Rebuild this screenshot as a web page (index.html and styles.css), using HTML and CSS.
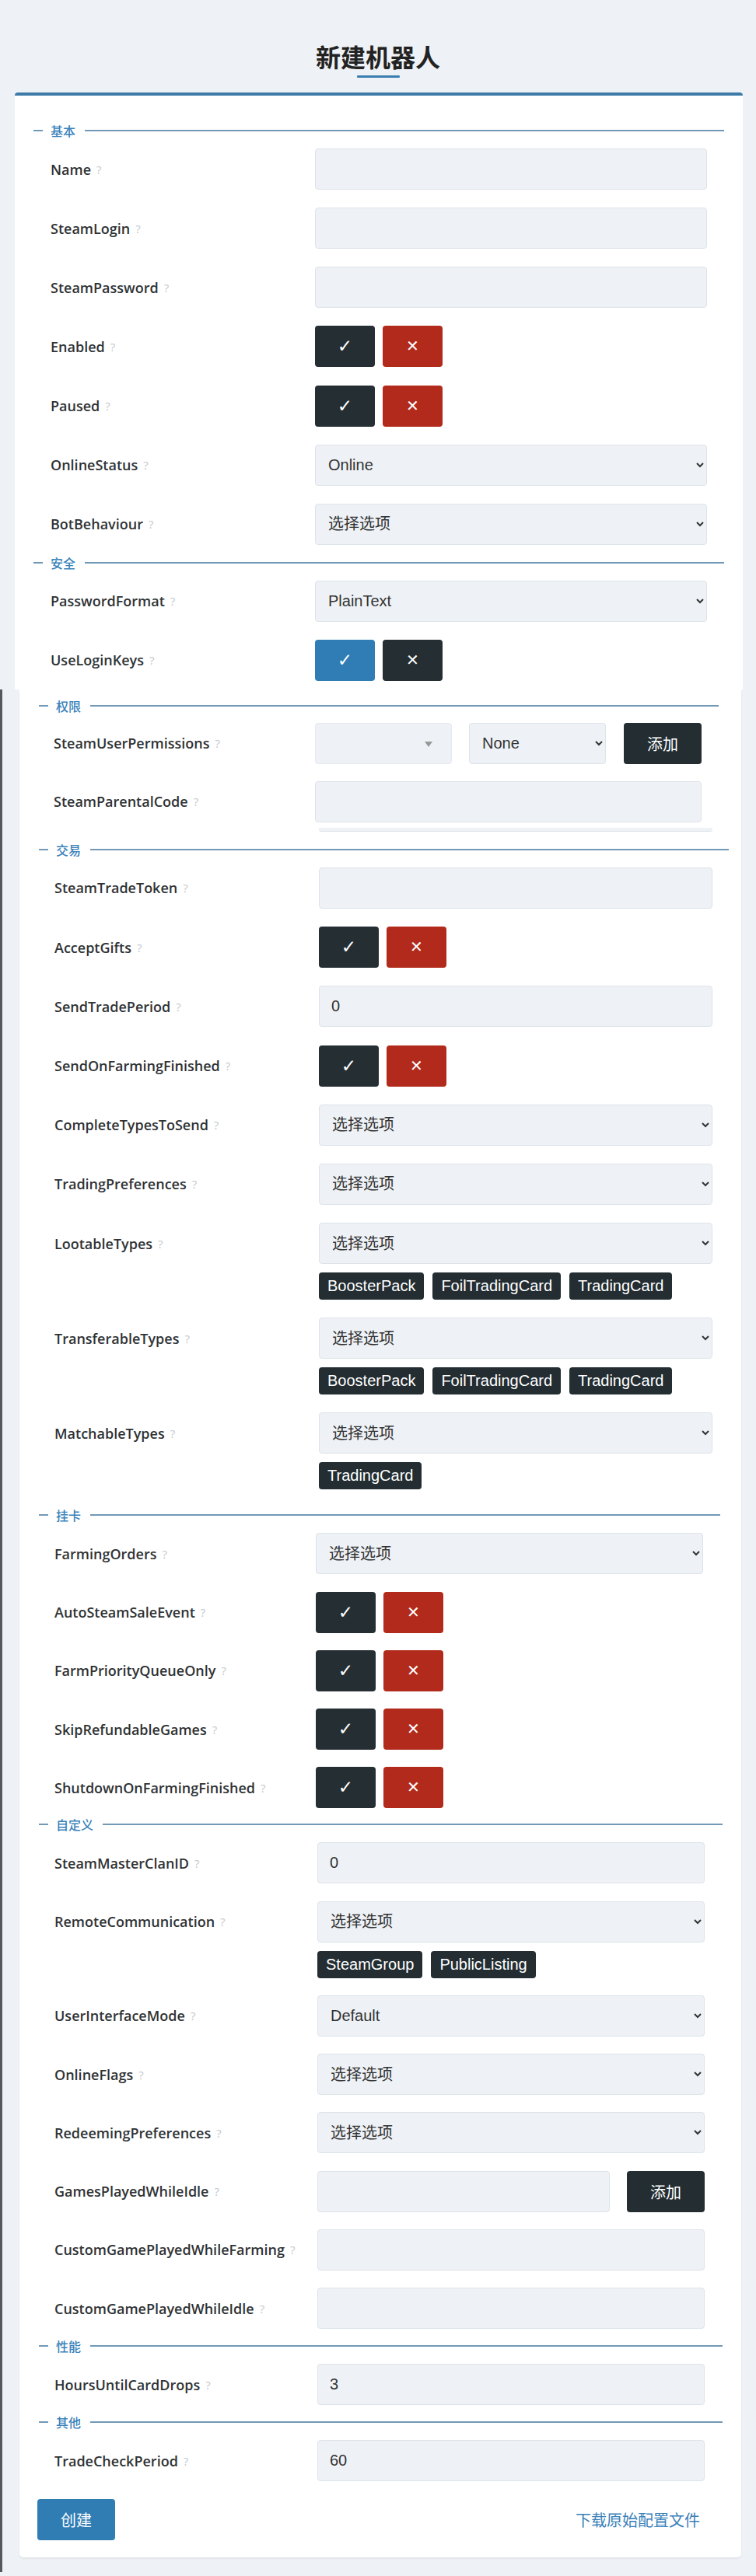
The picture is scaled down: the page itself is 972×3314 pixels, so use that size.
FILE: index.html
```html
<!DOCTYPE html>
<html lang="zh-CN">
<head>
<meta charset="utf-8">
<title>新建机器人</title>
<link rel="stylesheet" href="styles.css">
</head>
<body>
<header class="page-head">
  <h1 class="page-title">新建机器人</h1>
  <div class="title-bar"></div>
</header>

<div class="card card--top">
  <section class="group g-basic">
    <div class="legend"><span>基本</span></div>
    <div class="row"><label class="lbl">Name<span class="help">?</span></label><div class="ctl"><input class="field" type="text"></div></div>
    <div class="row"><label class="lbl">SteamLogin<span class="help">?</span></label><div class="ctl"><input class="field" type="text"></div></div>
    <div class="row"><label class="lbl">SteamPassword<span class="help">?</span></label><div class="ctl"><input class="field" type="password"></div></div>
    <div class="row"><label class="lbl">Enabled<span class="help">?</span></label><div class="ctl toggles"><button class="tg tg--dark">✓</button><button class="tg tg--red tg--x">✕</button></div></div>
    <div class="row"><label class="lbl">Paused<span class="help">?</span></label><div class="ctl toggles"><button class="tg tg--dark">✓</button><button class="tg tg--red tg--x">✕</button></div></div>
    <div class="row"><label class="lbl">OnlineStatus<span class="help">?</span></label><div class="ctl"><select class="field"><option>Online</option></select></div></div>
    <div class="row"><label class="lbl">BotBehaviour<span class="help">?</span></label><div class="ctl"><select class="field"><option>选择选项</option></select></div></div>
  </section>
  <section class="group g-security">
    <div class="legend"><span>安全</span></div>
    <div class="row"><label class="lbl">PasswordFormat<span class="help">?</span></label><div class="ctl"><select class="field"><option>PlainText</option></select></div></div>
    <div class="row"><label class="lbl">UseLoginKeys<span class="help">?</span></label><div class="ctl toggles"><button class="tg tg--blue">✓</button><button class="tg tg--dark tg--x">✕</button></div></div>
  </section>
</div>

<div class="lower">
  <div class="card card--bottom">
    <section class="group g-perm">
      <div class="legend"><span>权限</span></div>
      <div class="row"><label class="lbl">SteamUserPermissions<span class="help">?</span></label>
        <div class="ctl combo">
          <div class="fake-select"></div>
          <select class="field field--half"><option>None</option></select>
          <button class="btn-dark">添加</button>
        </div>
      </div>
      <div class="row"><label class="lbl">SteamParentalCode<span class="help">?</span></label><div class="ctl"><input class="field" type="text"></div></div>
    </section>

    <section class="group g-trade">
      <div class="sliver"></div>
      <div class="legend"><span>交易</span></div>
      <div class="row"><label class="lbl">SteamTradeToken<span class="help">?</span></label><div class="ctl"><input class="field" type="text"></div></div>
      <div class="row"><label class="lbl">AcceptGifts<span class="help">?</span></label><div class="ctl toggles"><button class="tg tg--dark">✓</button><button class="tg tg--red tg--x">✕</button></div></div>
      <div class="row"><label class="lbl">SendTradePeriod<span class="help">?</span></label><div class="ctl"><input class="field" type="text" value="0"></div></div>
      <div class="row"><label class="lbl">SendOnFarmingFinished<span class="help">?</span></label><div class="ctl toggles"><button class="tg tg--dark">✓</button><button class="tg tg--red tg--x">✕</button></div></div>
      <div class="row"><label class="lbl">CompleteTypesToSend<span class="help">?</span></label><div class="ctl"><select class="field"><option>选择选项</option></select></div></div>
      <div class="row"><label class="lbl">TradingPreferences<span class="help">?</span></label><div class="ctl"><select class="field"><option>选择选项</option></select></div></div>
      <div class="row"><label class="lbl">LootableTypes<span class="help">?</span></label>
        <div class="ctl"><select class="field"><option>选择选项</option></select>
          <div class="tags"><span class="tag">BoosterPack</span><span class="tag">FoilTradingCard</span><span class="tag">TradingCard</span></div>
        </div>
      </div>
      <div class="row"><label class="lbl">TransferableTypes<span class="help">?</span></label>
        <div class="ctl"><select class="field"><option>选择选项</option></select>
          <div class="tags"><span class="tag">BoosterPack</span><span class="tag">FoilTradingCard</span><span class="tag">TradingCard</span></div>
        </div>
      </div>
      <div class="row"><label class="lbl">MatchableTypes<span class="help">?</span></label>
        <div class="ctl"><select class="field"><option>选择选项</option></select>
          <div class="tags"><span class="tag">TradingCard</span></div>
        </div>
      </div>
    </section>

    <section class="group g-farm">
      <div class="legend"><span>挂卡</span></div>
      <div class="row"><label class="lbl">FarmingOrders<span class="help">?</span></label><div class="ctl"><select class="field"><option>选择选项</option></select></div></div>
      <div class="row"><label class="lbl">AutoSteamSaleEvent<span class="help">?</span></label><div class="ctl toggles"><button class="tg tg--dark">✓</button><button class="tg tg--red tg--x">✕</button></div></div>
      <div class="row"><label class="lbl">FarmPriorityQueueOnly<span class="help">?</span></label><div class="ctl toggles"><button class="tg tg--dark">✓</button><button class="tg tg--red tg--x">✕</button></div></div>
      <div class="row"><label class="lbl">SkipRefundableGames<span class="help">?</span></label><div class="ctl toggles"><button class="tg tg--dark">✓</button><button class="tg tg--red tg--x">✕</button></div></div>
      <div class="row"><label class="lbl">ShutdownOnFarmingFinished<span class="help">?</span></label><div class="ctl toggles"><button class="tg tg--dark">✓</button><button class="tg tg--red tg--x">✕</button></div></div>
    </section>

    <section class="group g-custom">
      <div class="legend"><span>自定义</span></div>
      <div class="row"><label class="lbl">SteamMasterClanID<span class="help">?</span></label><div class="ctl"><input class="field" type="text" value="0"></div></div>
      <div class="row"><label class="lbl">RemoteCommunication<span class="help">?</span></label>
        <div class="ctl"><select class="field"><option>选择选项</option></select>
          <div class="tags"><span class="tag">SteamGroup</span><span class="tag">PublicListing</span></div>
        </div>
      </div>
      <div class="row"><label class="lbl">UserInterfaceMode<span class="help">?</span></label><div class="ctl"><select class="field"><option>Default</option></select></div></div>
      <div class="row"><label class="lbl">OnlineFlags<span class="help">?</span></label><div class="ctl"><select class="field"><option>选择选项</option></select></div></div>
      <div class="row"><label class="lbl">RedeemingPreferences<span class="help">?</span></label><div class="ctl"><select class="field"><option>选择选项</option></select></div></div>
      <div class="row"><label class="lbl">GamesPlayedWhileIdle<span class="help">?</span></label><div class="ctl combo combo--add"><input class="field" type="text"><button class="btn-dark">添加</button></div></div>
      <div class="row"><label class="lbl">CustomGamePlayedWhileFarming<span class="help">?</span></label><div class="ctl"><input class="field" type="text"></div></div>
      <div class="row"><label class="lbl">CustomGamePlayedWhileIdle<span class="help">?</span></label><div class="ctl"><input class="field" type="text"></div></div>
    </section>

    <section class="group g-perf">
      <div class="legend"><span>性能</span></div>
      <div class="row"><label class="lbl">HoursUntilCardDrops<span class="help">?</span></label><div class="ctl"><input class="field" type="text" value="3"></div></div>
    </section>

    <section class="group g-other">
      <div class="legend"><span>其他</span></div>
      <div class="row"><label class="lbl">TradeCheckPeriod<span class="help">?</span></label><div class="ctl"><input class="field" type="text" value="60"></div></div>
    </section>

    <div class="actions">
      <button class="btn-primary">创建</button>
      <a class="dl-link" href="#">下载原始配置文件</a>
    </div>
  </div>
</div>
</body>
</html>
```
FILE: styles.css
```css
html, body {
  margin: 0;
  padding: 0;
  background: #eef2f6;
}
body {
  font-family: "Open Sans", "Noto Sans CJK SC", sans-serif;
  color: #333;
}

/* header */
.page-head {
  padding-top: 50px;
}
.page-title {
  margin: 0;
  text-align: center;
  font-family: "Noto Sans CJK SC", sans-serif;
  font-weight: 700;
  font-size: 32px;
  line-height: 44px;
  color: #222;
}
.title-bar {
  width: 55px;
  height: 3px;
  margin: 3px auto 0;
  background: #3b7db0;
  border-radius: 1px;
}

/* cards */
.card {
  background: #fff;
  box-sizing: border-box;
}
.card--top {
  margin: 19px 17px 0 19px;
  border-top: 4px solid #3d7ba8;
  border-radius: 4px 4px 0 0;
  padding: 35px 24px 11px 24px;
}
.lower {
  border-left: 3px solid #56595c;
  padding: 0 19px 19px 22px;
}
.card--bottom {
  border-radius: 0 0 5px 5px;
  padding: 11px 0 22px 0;
  box-shadow: 0 2px 3px rgba(0, 0, 0, 0.06);
}

/* groups */
.group {
  --lab: 22px;
  --col: 340px;
  --cw: 504px;
  --gap: 23.15px;
  --lm: 13px;
  --first: 13px;
}
.card--bottom .group {
  margin-left: 25px;
}
.g-basic { --lm: 0px; }
.g-perm { --lab: 19px; --col: 336px; --cw: 497px; --gap: 22px; --lm: 0px; --first: 12px; margin-right: 29px; }
.g-trade { --lab: 20px; --col: 340px; --cw: 506px; --gap: 23.2px; margin-right: 16px; }
.g-farm { --lab: 20px; --col: 336px; --cw: 498px; --gap: 22.25px; --lm: 23px; margin-right: 27px; }
.g-custom { --lab: 20px; --col: 338px; --cw: 498px; --gap: 22.25px; --lm: 11px; margin-right: 24px; }
.g-perf, .g-other { --lab: 20px; --col: 338px; --cw: 498px; --gap: 22.25px; --lm: 12px; margin-right: 24px; }

.legend {
  display: flex;
  align-items: center;
  height: 20px;
  margin-top: var(--lm);
  font-family: "Noto Sans CJK SC", sans-serif;
  font-size: 16px;
  font-weight: 500;
  color: #3a82ba;
}
.legend::before,
.legend::after {
  content: "";
  height: 2px;
  background: #7199b6;
}
.legend::before {
  width: 12px;
}
.legend::after {
  flex: 1;
}
.legend span {
  padding: 0 12px 0 10px;
  line-height: 20px;
}

.sliver {
  margin: 7px 0 0 360px;
  width: 506px;
  height: 4px;
  background: #eef2f6;
  border-bottom: 1px solid #dfe4ea;
  border-radius: 0 0 3px 3px;
}
.g-trade .legend {
  margin-top: 13px;
}

/* rows */
.row {
  display: grid;
  grid-template-columns: var(--col) var(--cw);
  padding-left: var(--lab);
  margin-top: var(--gap);
  align-items: start;
}
.legend + .row {
  margin-top: var(--first);
}
.lbl {
  height: 53px;
  display: flex;
  align-items: center;
  font-family: "Open Sans", sans-serif;
  font-weight: 600;
  font-size: 18px;
  color: #2f3335;
  white-space: nowrap;
}
.help {
  margin-left: 7px;
  font-weight: 400;
  font-size: 15px;
  color: #c4c9cd;
}
.ctl {
  display: flex;
  flex-direction: column;
  min-width: 0;
}

/* fields */
.field {
  box-sizing: border-box;
  width: 100%;
  height: 53px;
  margin: 0;
  border: 1px solid #dde3e9;
  border-radius: 4px;
  background-color: #eef2f6;
  font-family: "Liberation Sans", "Noto Sans CJK SC", sans-serif;
  font-size: 20px;
  color: #333;
  padding: 0 15px;
  outline: none;
}
select.field {
  padding: 0 8px 0 12px;
}

/* toggles */
.toggles {
  flex-direction: row;
  gap: 10px;
}
.tg {
  width: 77px;
  height: 53px;
  border: 0;
  border-radius: 4px;
  color: #fff;
  font-family: "DejaVu Sans", sans-serif;
  font-weight: 700;
  font-size: 23px;
  padding: 0;
  line-height: 53px;
}
.tg--x {
  font-size: 20px;
}
.tg--dark { background: #242e33; }
.tg--red { background: #b12a1b; }
.tg--blue { background: #2f7db4; }

/* combos */
.combo {
  flex-direction: row;
  align-items: center;
}
.fake-select {
  position: relative;
  box-sizing: border-box;
  width: 176px;
  height: 53px;
  border: 1px solid #e4e9ee;
  border-radius: 4px;
  background: #eef2f6;
}
.fake-select::after {
  content: "";
  position: absolute;
  right: 24px;
  top: 23px;
  border-left: 5px solid transparent;
  border-right: 5px solid transparent;
  border-top: 7px solid #999;
}
.field--half {
  width: 176px;
  margin-left: 22px;
}
.combo .btn-dark {
  margin-left: 23px;
}
.combo--add .field {
  flex: 1;
  width: auto;
}
.combo--add .btn-dark {
  margin-left: 22px;
}
.btn-dark {
  flex: none;
  width: 100px;
  height: 53px;
  border: 0;
  border-radius: 4px;
  background: #232d32;
  color: #fff;
  font-family: "Noto Sans CJK SC", sans-serif;
  font-size: 20px;
  padding: 0;
}

/* tags */
.tags {
  display: flex;
  gap: 11px;
  margin-top: 11px;
}
.tag {
  height: 35px;
  line-height: 35px;
  padding: 0 11px;
  border-radius: 4px;
  background: #232d32;
  color: #fff;
  font-family: "Liberation Sans", sans-serif;
  font-size: 20px;
}

/* actions */
.actions {
  display: flex;
  align-items: center;
  justify-content: space-between;
  margin: 23px 53px 0 23px;
}
.btn-primary {
  width: 100px;
  height: 53px;
  border: 0;
  border-radius: 4px;
  background: #2f7db3;
  color: #fff;
  font-family: "Noto Sans CJK SC", sans-serif;
  font-size: 20px;
  padding: 0;
}
.dl-link {
  font-family: "Noto Sans CJK SC", sans-serif;
  font-size: 20px;
  color: #3a80b8;
  text-decoration: none;
}
```
